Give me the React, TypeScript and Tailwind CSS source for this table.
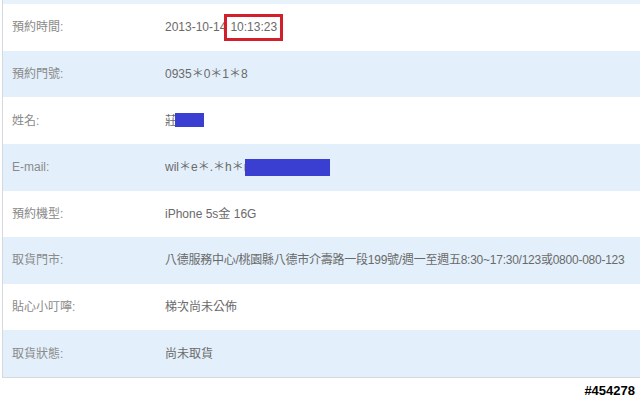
import type { ReactNode } from 'react'

interface Row {
  label: string
  value: ReactNode
}

const Redact = ({ className }: { className: string }) => (
  <span className={`inline-block bg-[#3b3fd1] align-middle ${className}`} />
)

const rows: Row[] = [
  {
    label: '預約時間:',
    value: (
      <>
        2013-10-14
        <span className="ml-[-2px] inline-block border-[3px] border-[#d21f2c] px-[3px] py-[3px] leading-[15px]">10:13:23</span>
      </>
    ),
  },
  { label: '預約門號:', value: '0935＊0＊1＊8' },
  {
    label: '姓名:',
    value: (
      <>
        莊<Redact className="ml-[-2px] mt-[-2px] h-[14px] w-[29px]" />
      </>
    ),
  },
  {
    label: 'E-mail:',
    value: (
      <>
        wil＊e＊.＊h＊r<Redact className="ml-[-3px] h-[17px] w-[85px]" />
      </>
    ),
  },
  { label: '預約機型:', value: 'iPhone 5s金 16G' },
  {
    label: '取貨門市:',
    value: <span className="tracking-[-0.25px]">八德服務中心/桃園縣八德市介壽路一段199號/週一至週五8:30~17:30/123或0800-080-123</span>,
  },
  { label: '貼心小叮嚀:', value: '梯次尚未公佈' },
  { label: '取貨狀態:', value: '尚未取貨' },
]

export default function App() {
  return (
    <div className="h-[397px] w-[640px] overflow-hidden bg-white font-['Liberation_Sans','Noto_Sans_CJK_TC',sans-serif] text-[12px]">
      <div className="ml-[2px] border-b border-l border-[#d3d9de]">
        <div className="h-[4px] bg-[#e7f2fb]" />
        {rows.map((row, index) => (
          <div
            key={index}
            className={`flex h-[46.625px] items-center whitespace-nowrap ${index % 2 === 1 ? 'bg-[#e3f0fb]' : 'bg-white'}`}
          >
            <div className="w-[162px] shrink-0 pl-[9px] text-[#8a8a8a]">{row.label}</div>
            <div className="text-[#6a6a6a]">{row.value}</div>
          </div>
        ))}
      </div>
      <div className="pr-[5px] pt-[3px] text-right text-[13px] font-bold text-black [text-shadow:1px_0_0_#fff,-1px_0_0_#fff,0_1px_0_#fff,0_-1px_0_#fff,0_0_2px_#fff]">
        #454278
      </div>
    </div>
  )
}
